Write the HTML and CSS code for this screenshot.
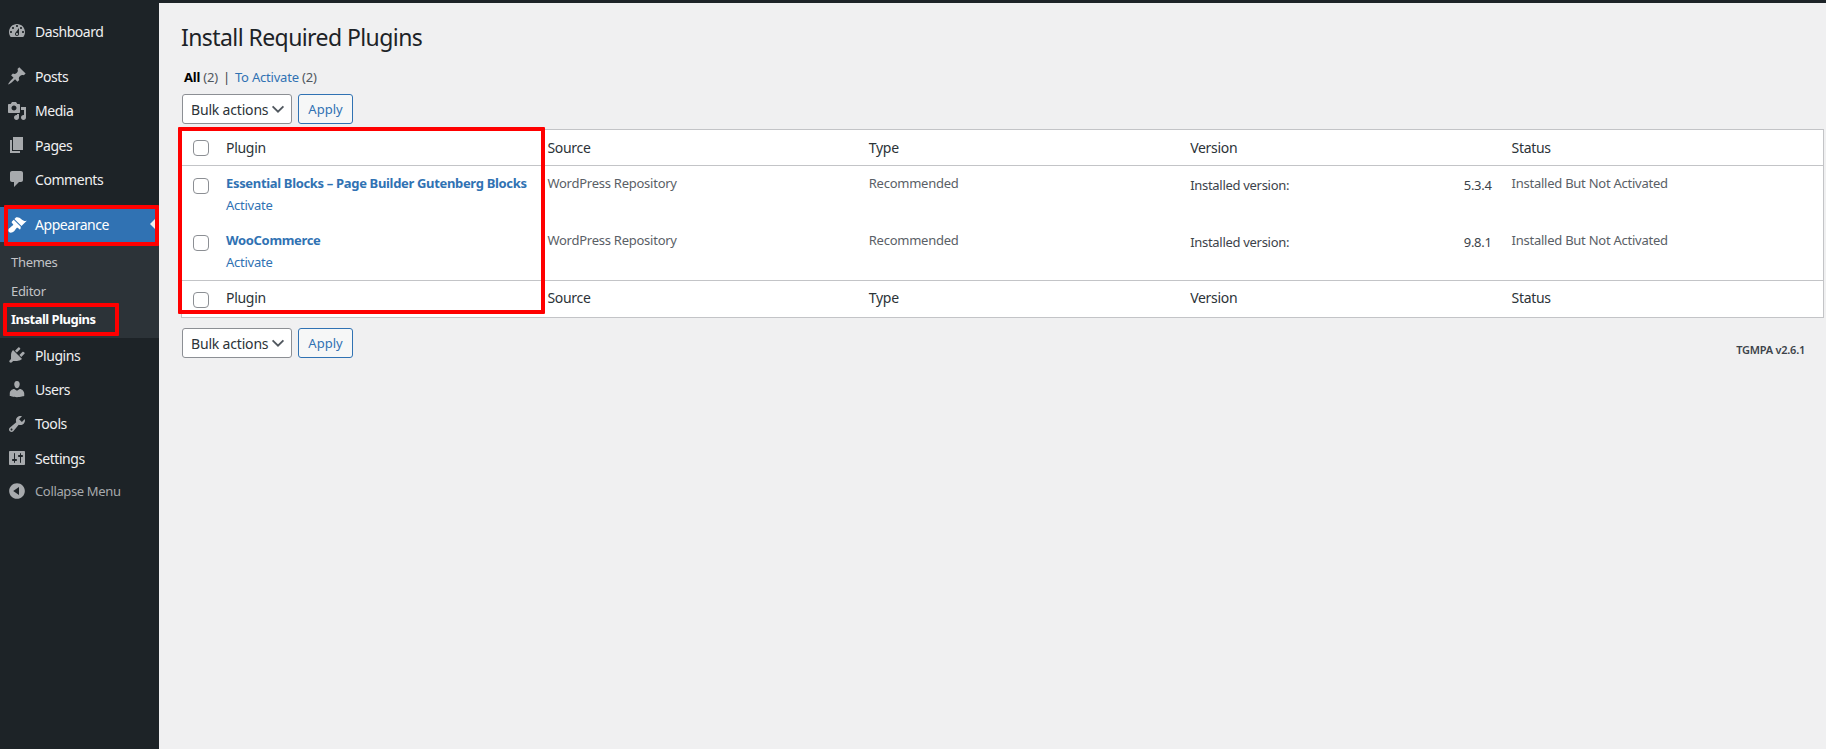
FILE: index.html
```html
<!DOCTYPE html>
<html lang="en">
<head>
<meta charset="utf-8">
<title>Install Required Plugins</title>
<link rel="stylesheet" href="styles.css">
</head>
<body>
<div class="topbar"></div>
<div class="shell">
<nav class="side">
  <a class="item dash"><svg viewBox="0 0 20 20"><path fill-rule="evenodd" d="M3.76 16h12.48c1.1-1.37 1.76-3.11 1.76-5 0-4.42-3.58-8-8-8s-8 3.58-8 8c0 1.89.66 3.63 1.76 5zM10 4c.55 0 1 .45 1 1s-.45 1-1 1-1-.45-1-1 .45-1 1-1zM6 6c.55 0 1 .45 1 1s-.45 1-1 1-1-.45-1-1 .45-1 1-1zm8 0c.55 0 1 .45 1 1s-.45 1-1 1-1-.45-1-1 .45-1 1-1zm-5.37 5.55L12 7v6c0 1.1-.9 2-2 2s-2-.9-2-2c0-.57.24-1.08.63-1.45zM4 10c.55 0 1 .45 1 1s-.45 1-1 1-1-.45-1-1 .45-1 1-1zm12 0c.55 0 1 .45 1 1s-.45 1-1 1-1-.45-1-1 .45-1 1-1zm-5 3c0-.55-.45-1-1-1s-1 .45-1 1 .45 1 1 1 1-.45 1-1z"/></svg><span>Dashboard</span></a>
  <div class="sep"></div>
  <a class="item"><svg viewBox="0 0 20 20"><path d="M10.44 3.02l1.82-1.82 6.36 6.35-1.83 1.82c-1.05-.68-2.48-.57-3.41.36l-.75.75c-.92.93-1.04 2.35-.35 3.41l-1.83 1.82-2.41-2.41-2.8 2.79c-.42.42-3.38 2.71-3.8 2.29s1.86-3.39 2.28-3.81l2.79-2.79L4.1 9.36l1.83-1.82c1.05.69 2.48.57 3.4-.36l.75-.75c.93-.92 1.05-2.35.36-3.41z"/></svg><span>Posts</span></a>
  <a class="item"><svg viewBox="0 0 20 20"><path fill-rule="evenodd" d="M13 11V4c0-.55-.45-1-1-1h-1.67L9 1H5L3.67 3H2c-.55 0-1 .45-1 1v7c0 .55.45 1 1 1h10c.55 0 1-.45 1-1zM7 4.5c1.38 0 2.5 1.12 2.5 2.5S8.38 9.5 7 9.5 4.5 8.38 4.5 7 5.62 4.5 7 4.5zM14 6h5v10.5c0 1.38-1.12 2.5-2.5 2.5S14 17.88 14 16.5s1.12-2.5 2.5-2.5c.17 0 .34.02.5.05V9h-3V6zm-4 8.05V13h2v3.5c0 1.38-1.12 2.5-2.5 2.5S7 17.88 7 16.5 8.12 14 9.5 14c.17 0 .34.02.5.05z"/></svg><span>Media</span></a>
  <a class="item"><svg viewBox="0 0 20 20"><path d="M6 15V2h10v13H6zm-1 1h8v2H3V5h2v11z"/></svg><span>Pages</span></a>
  <a class="item"><svg viewBox="0 0 20 20"><path d="M5 2h9c1.1 0 2 .9 2 2v7c0 1.1-.9 2-2 2h-2l-5 5v-5H5c-1.1 0-2-.9-2-2V4c0-1.1.9-2 2-2z"/></svg><span>Comments</span></a>
  <div class="sep"></div>
  <a class="item current"><svg viewBox="0 0 20 20"><path d="M14.48 11.06L7.41 3.99l1.5-1.5c.5-.56 2.3-.47 3.51.32 1.21.8 1.43 1.28 2.91 2.1 1.18.64 2.45 1.26 4.45.85zm-.71.71L6.7 4.7 4.93 6.47c-.39.39-.39 1.02 0 1.41l1.06 1.06c.39.39.39 1.03 0 1.42-.6.6-1.43 1.11-2.21 1.69-.35.26-.7.53-1.01.84C1.43 13.23.78 15.78 2 17s3.78.57 5.08-.73c.31-.31.58-.66.85-1.02.57-.78 1.08-1.61 1.69-2.21.39-.39 1.02-.39 1.41 0l1.06 1.06c.39.39 1.02.39 1.41 0z"/></svg><span>Appearance</span><i class="notch"></i><b class="mark mark-app"></b></a>
  <div class="sub">
    <a class="subitem">Themes</a>
    <a class="subitem">Editor</a>
    <a class="subitem on">Install Plugins<b class="mark mark-inst"></b></a>
  </div>
  <a class="item"><svg viewBox="0 0 20 20"><path d="M13.11 4.36L9.87 7.6 8 5.73l3.24-3.24c.35-.34 1.05-.2 1.56.32.52.51.66 1.21.31 1.55zm-8 1.77l.91-1.12 9.01 9.01-1.19.84c-.71.71-2.63 1.16-3.82 1.16H6.14L4.9 17.26c-.59.59-1.54.59-2.12 0-.59-.58-.59-1.53 0-2.12l1.24-1.24v-3.88c0-1.13.4-3.19 1.09-3.89zm7.26 3.97l3.24-3.24c.34-.35 1.04-.21 1.55.31.52.51.66 1.21.31 1.55l-3.24 3.25z"/></svg><span>Plugins</span></a>
  <a class="item"><svg viewBox="0 0 20 20"><path d="M10 9.25c-2.27 0-2.73-3.44-2.73-3.44C7 4.02 7.82 2 9.97 2c2.16 0 2.98 2.02 2.71 3.81 0 0-.41 3.44-2.68 3.44zm0 2.57L12.72 10c2.39 0 4.52 2.33 4.52 4.53v2.49s-3.65 1.13-7.24 1.13c-3.65 0-7.24-1.13-7.24-1.13v-2.49c0-2.25 1.94-4.48 4.47-4.48z"/></svg><span>Users</span></a>
  <a class="item"><svg viewBox="0 0 20 20"><path fill-rule="evenodd" d="M16.68 9.77c-1.34 1.34-3.3 1.67-4.95.99l-5.41 6.52c-.99.99-2.59.99-3.58 0s-.99-2.59 0-3.57l6.52-5.42c-.68-1.65-.35-3.61.99-4.95 1.28-1.28 3.12-1.62 4.72-1.06l-2.89 2.89 2.82 2.82 2.86-2.87c.53 1.58.18 3.39-1.08 4.65zM3.81 16.21c.4.39 1.04.39 1.43 0 .4-.4.4-1.04 0-1.43-.39-.4-1.03-.4-1.43 0-.39.39-.39 1.03 0 1.43z"/></svg><span>Tools</span></a>
  <a class="item"><svg viewBox="0 0 20 20"><path fill-rule="evenodd" d="M18 16V4c0-.55-.45-1-1-1H3c-.55 0-1 .45-1 1v12c0 .55.45 1 1 1h14c.55 0 1-.45 1-1zM8 11h1c.55 0 1 .45 1 1s-.45 1-1 1H8v1.5c0 .28-.22.5-.5.5s-.5-.22-.5-.5V13H6c-.55 0-1-.45-1-1s.45-1 1-1h1V5.5c0-.28.22-.5.5-.5s.5.22.5.5V11zm5-2h-1c-.55 0-1-.45-1-1s.45-1 1-1h1V5.5c0-.28.22-.5.5-.5s.5.22.5.5V7h1c.55 0 1 .45 1 1s-.45 1-1 1h-1v5.5c0 .28-.22.5-.5.5s-.5-.22-.5-.5V9z"/></svg><span>Settings</span></a>
  <a class="item collapse"><svg viewBox="0 0 20 20"><path fill-rule="evenodd" d="M10 2.16c4.33 0 7.84 3.51 7.84 7.84s-3.51 7.84-7.84 7.84S2.16 14.33 2.16 10 5.71 2.16 10 2.16zm2 11.72V6.12L6.18 9.97z"/></svg><span>Collapse Menu</span></a>
</nav>
<main class="main">
  <h1>Install Required Plugins</h1>
  <ul class="views"><li><strong>All</strong> <span class="count">(2)</span></li><li class="bar">|</li><li><a>To Activate</a> <span class="count">(2)</span></li></ul>
  <div class="actions">
    <div class="select">Bulk actions<svg viewBox="0 0 20 20"><path d="M4 7l6 6 6-6" fill="none" stroke="#50575e" stroke-width="2"/></svg></div>
    <div class="apply">Apply</div>
  </div>
  <div class="tablewrap">
    <table>
      <colgroup><col class="c-check"><col><col><col><col><col></colgroup>
      <thead><tr class="hd"><td class="chk"><span class="cb"></span></td><th>Plugin</th><th>Source</th><th>Type</th><th>Version</th><th>Status</th></tr></thead>
      <tbody>
        <tr><td class="chk"><span class="cb"></span></td><td class="name"><a class="title">Essential Blocks – Page Builder Gutenberg Blocks</a><a class="act">Activate</a></td><td>WordPress Repository</td><td>Recommended</td><td class="ver"><div class="verrow"><span>Installed version:</span><span>5.3.4</span></div></td><td>Installed But Not Activated</td></tr>
        <tr><td class="chk"><span class="cb"></span></td><td class="name"><a class="title">WooCommerce</a><a class="act">Activate</a></td><td>WordPress Repository</td><td>Recommended</td><td class="ver"><div class="verrow"><span>Installed version:</span><span>9.8.1</span></div></td><td>Installed But Not Activated</td></tr>
      </tbody>
      <tfoot><tr class="ft"><td class="chk"><span class="cb"></span></td><th>Plugin</th><th>Source</th><th>Type</th><th>Version</th><th>Status</th></tr></tfoot>
    </table>
    <b class="mark mark-table"></b>
  </div>
  <div class="actions bottom">
    <div class="select">Bulk actions<svg viewBox="0 0 20 20"><path d="M4 7l6 6 6-6" fill="none" stroke="#50575e" stroke-width="2"/></svg></div>
    <div class="apply">Apply</div>
    <div class="tgmpa">TGMPA v2.6.1</div>
  </div>
</main>
</div>
</body>
</html>
```
FILE: styles.css
```css
* { box-sizing: border-box; }
html, body { margin: 0; height: 100%; }
body {
  background: #f0f0f1;
  color: #3c434a;
  font-family: "Noto Sans", "Open Sans", sans-serif;
  font-size: 13px;
  overflow: hidden;
}
.topbar { height: 3px; background: #1d2327; }
.shell { display: flex; height: 746px; }

.side {
  width: 159px;
  flex: none;
  background: #1d2327;
  color: #f0f0f1;
  padding-top: 11px;
  font-size: 14px;
  letter-spacing: -0.45px;
}
.item {
  position: relative;
  display: flex;
  align-items: center;
  height: 34.3px;
  padding-left: 7px;
  gap: 9px;
}
.item svg { width: 20px; height: 20px; fill: #a7aaad; flex: none; margin-right: -1px; }
.sep { height: 11px; }
.item.current {
  background: #3072b3;
  color: #fff;
  height: 35px;
}
.item.current svg { fill: #fff; }
.notch {
  position: absolute;
  right: 4px;
  top: 12px;
  border: 5px solid transparent;
  border-right-color: #f0f0f1;
  border-left: 0;
}
.sub {
  background: #2c3338;
  padding: 6px 0 4px;
  font-size: 13px;
  color: #c3c4c7;
  letter-spacing: -0.3px;
}
.subitem { position: relative; display: block; height: 28.5px; line-height: 28px; padding-left: 11px; width: 100%; }
.subitem.on { color: #fff; font-weight: 700; letter-spacing: -0.5px; }
.collapse { color: #a7aaad; font-size: 13px; height: 31px; letter-spacing: -0.35px; }

.mark { position: absolute; border: 4px solid #f00; border-radius: 1px; pointer-events: none; }
.mark-app { left: 4px; right: 0; top: -2px; bottom: -4px; }
.mark-inst { left: 3px; width: 116px; top: -2px; bottom: -2px; }
.mark-table { left: -3px; top: -2px; width: 367px; height: 187px; }

.main { flex: 1; padding-left: 22px; padding-right: 2px; min-width: 0; }
h1 { margin: 0; padding-top: 20px; font-size: 23px; font-weight: 400; line-height: 29px; color: #1d2327; letter-spacing: -0.58px; }
.views { list-style: none; margin: 16px 0 0 3px; padding: 0; display: flex; gap: 5px; height: 18px; line-height: 18px; font-size: 13px; letter-spacing: -0.2px; color: #50575e; }
.views strong { color: #000; }
.views .bar { color: #3c434a; }
.views a { color: #3072b3; }
.actions { display: flex; margin-top: 8px; margin-left: 1px; height: 30px; align-items: center; gap: 6px; }
.select {
  width: 110px; height: 30px;
  border: 1px solid #8c8f94; border-radius: 3px;
  background: #fff; color: #2c3338;
  font-size: 14px; letter-spacing: -0.18px;
  display: flex; align-items: center; justify-content: space-between;
  padding: 0 4px 0 8px;
}
.select svg { width: 18px; height: 18px; flex: none; }
.apply {
  width: 55px; height: 30px;
  border: 1px solid #3072b3; border-radius: 3px;
  background: #f6f7f7; color: #3072b3;
  font-size: 13px; display: flex; align-items: center; justify-content: center;
}
.tablewrap { position: relative; margin-top: 5px; }
table {
  width: 100%;
  table-layout: fixed;
  border-collapse: separate;
  border-spacing: 0;
  background: #fff;
  border: 1px solid #c3c4c7;
  letter-spacing: -0.25px;
}
.c-check { width: 34px; }
th { text-align: left; font-weight: 400; font-size: 14px; color: #2c3338; padding: 8px 10px; height: 36px; letter-spacing: -0.3px; }
td { vertical-align: top; padding: 8px 10px; color: #5a6066; height: 57px; line-height: 19px; }
.hd th, .hd td { border-bottom: 1px solid #c3c4c7; height: 36px; }
.ft th, .ft td { border-top: 1px solid #c3c4c7; height: 37px; }
.ft th { padding: 6px 10px 10px; }
.chk { padding: 0 0 0 11px; vertical-align: middle; }
.ft .chk { padding-top: 2px; }
tbody .chk { vertical-align: top; padding-top: 12px; }
.cb { display: block; width: 16px; height: 16px; border: 1px solid #8c8f94; border-radius: 4px; background: #fff; }
.title { display: block; color: #3072b3; font-weight: 700; letter-spacing: -0.33px; white-space: nowrap; }
.act { display: block; color: #3072b3; margin-top: 3px; }
.ver { color: #3c434a; padding-top: 10px; letter-spacing: -0.3px; }
.verrow { display: flex; justify-content: space-between; }
.bottom { margin-top: 10px; position: relative; }
.tgmpa { margin-left: auto; margin-right: 19px; margin-top: 12px; font-size: 11px; font-weight: 600; color: #3c434a; letter-spacing: -0.25px; }
```
